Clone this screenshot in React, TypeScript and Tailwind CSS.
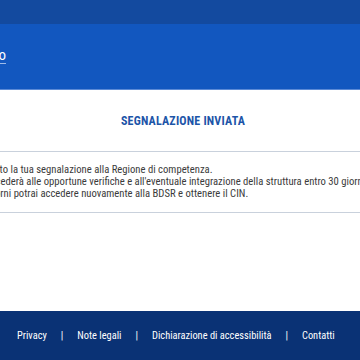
export default function App() {
  const font = { fontFamily: '"Liberation Sans Narrow", "Roboto Condensed", Roboto, sans-serif' };

  return (
    <div className="min-h-screen flex flex-col bg-white overflow-hidden" style={font}>
      {/* Slim top bar */}
      <div className="h-[24px] bg-[#134a9f]" />

      {/* Blue header band */}
      <div className="h-[66px] bg-[#1257bf] border-b border-[#5b8ad6] flex items-center">
        <div className="w-[6px] flex justify-end whitespace-nowrap mb-[2px]">
          <a className="text-white text-[15px] underline underline-offset-[3px] decoration-[#9fbbe8]">
            Ministero del Turismo
          </a>
        </div>
      </div>

      {/* Content */}
      <main className="flex flex-col">
        <h1 className="mt-[22px] pl-[6px] text-center text-[12px] font-bold text-[#1d55a8] tracking-[0.2px]">
          SEGNALAZIONE INVIATA
        </h1>

        <div className="mt-[21px] border-t border-b border-[#c9d1dc] py-[12px]">
          <div className="ml-[-67px] whitespace-nowrap text-[10.65px] leading-[12px] text-[#3b3b3b]">
            <p>Abbiamo inoltrato la tua segnalazione alla Regione di competenza.</p>
            <p>La Regione procederà alle opportune verifiche e all'eventuale integrazione della struttura entro 30 giorni.</p>
            <p>Trascorsi 30 giorni potrai accedere nuovamente alla BDSR e ottenere il CIN.</p>
          </div>
        </div>
      </main>

      <div className="flex-1" />

      {/* Footer */}
      <footer className="h-[49px] bg-[#0a3275] flex items-center">
        <ul className="flex items-center pl-[17px] text-[10.4px] text-white gap-[14px]">
          <li><a>Privacy</a></li>
          <li>|</li>
          <li><a>Note legali</a></li>
          <li>|</li>
          <li><a>Dichiarazione di accessibilità</a></li>
          <li>|</li>
          <li><a>Contatti</a></li>
        </ul>
      </footer>
    </div>
  );
}
